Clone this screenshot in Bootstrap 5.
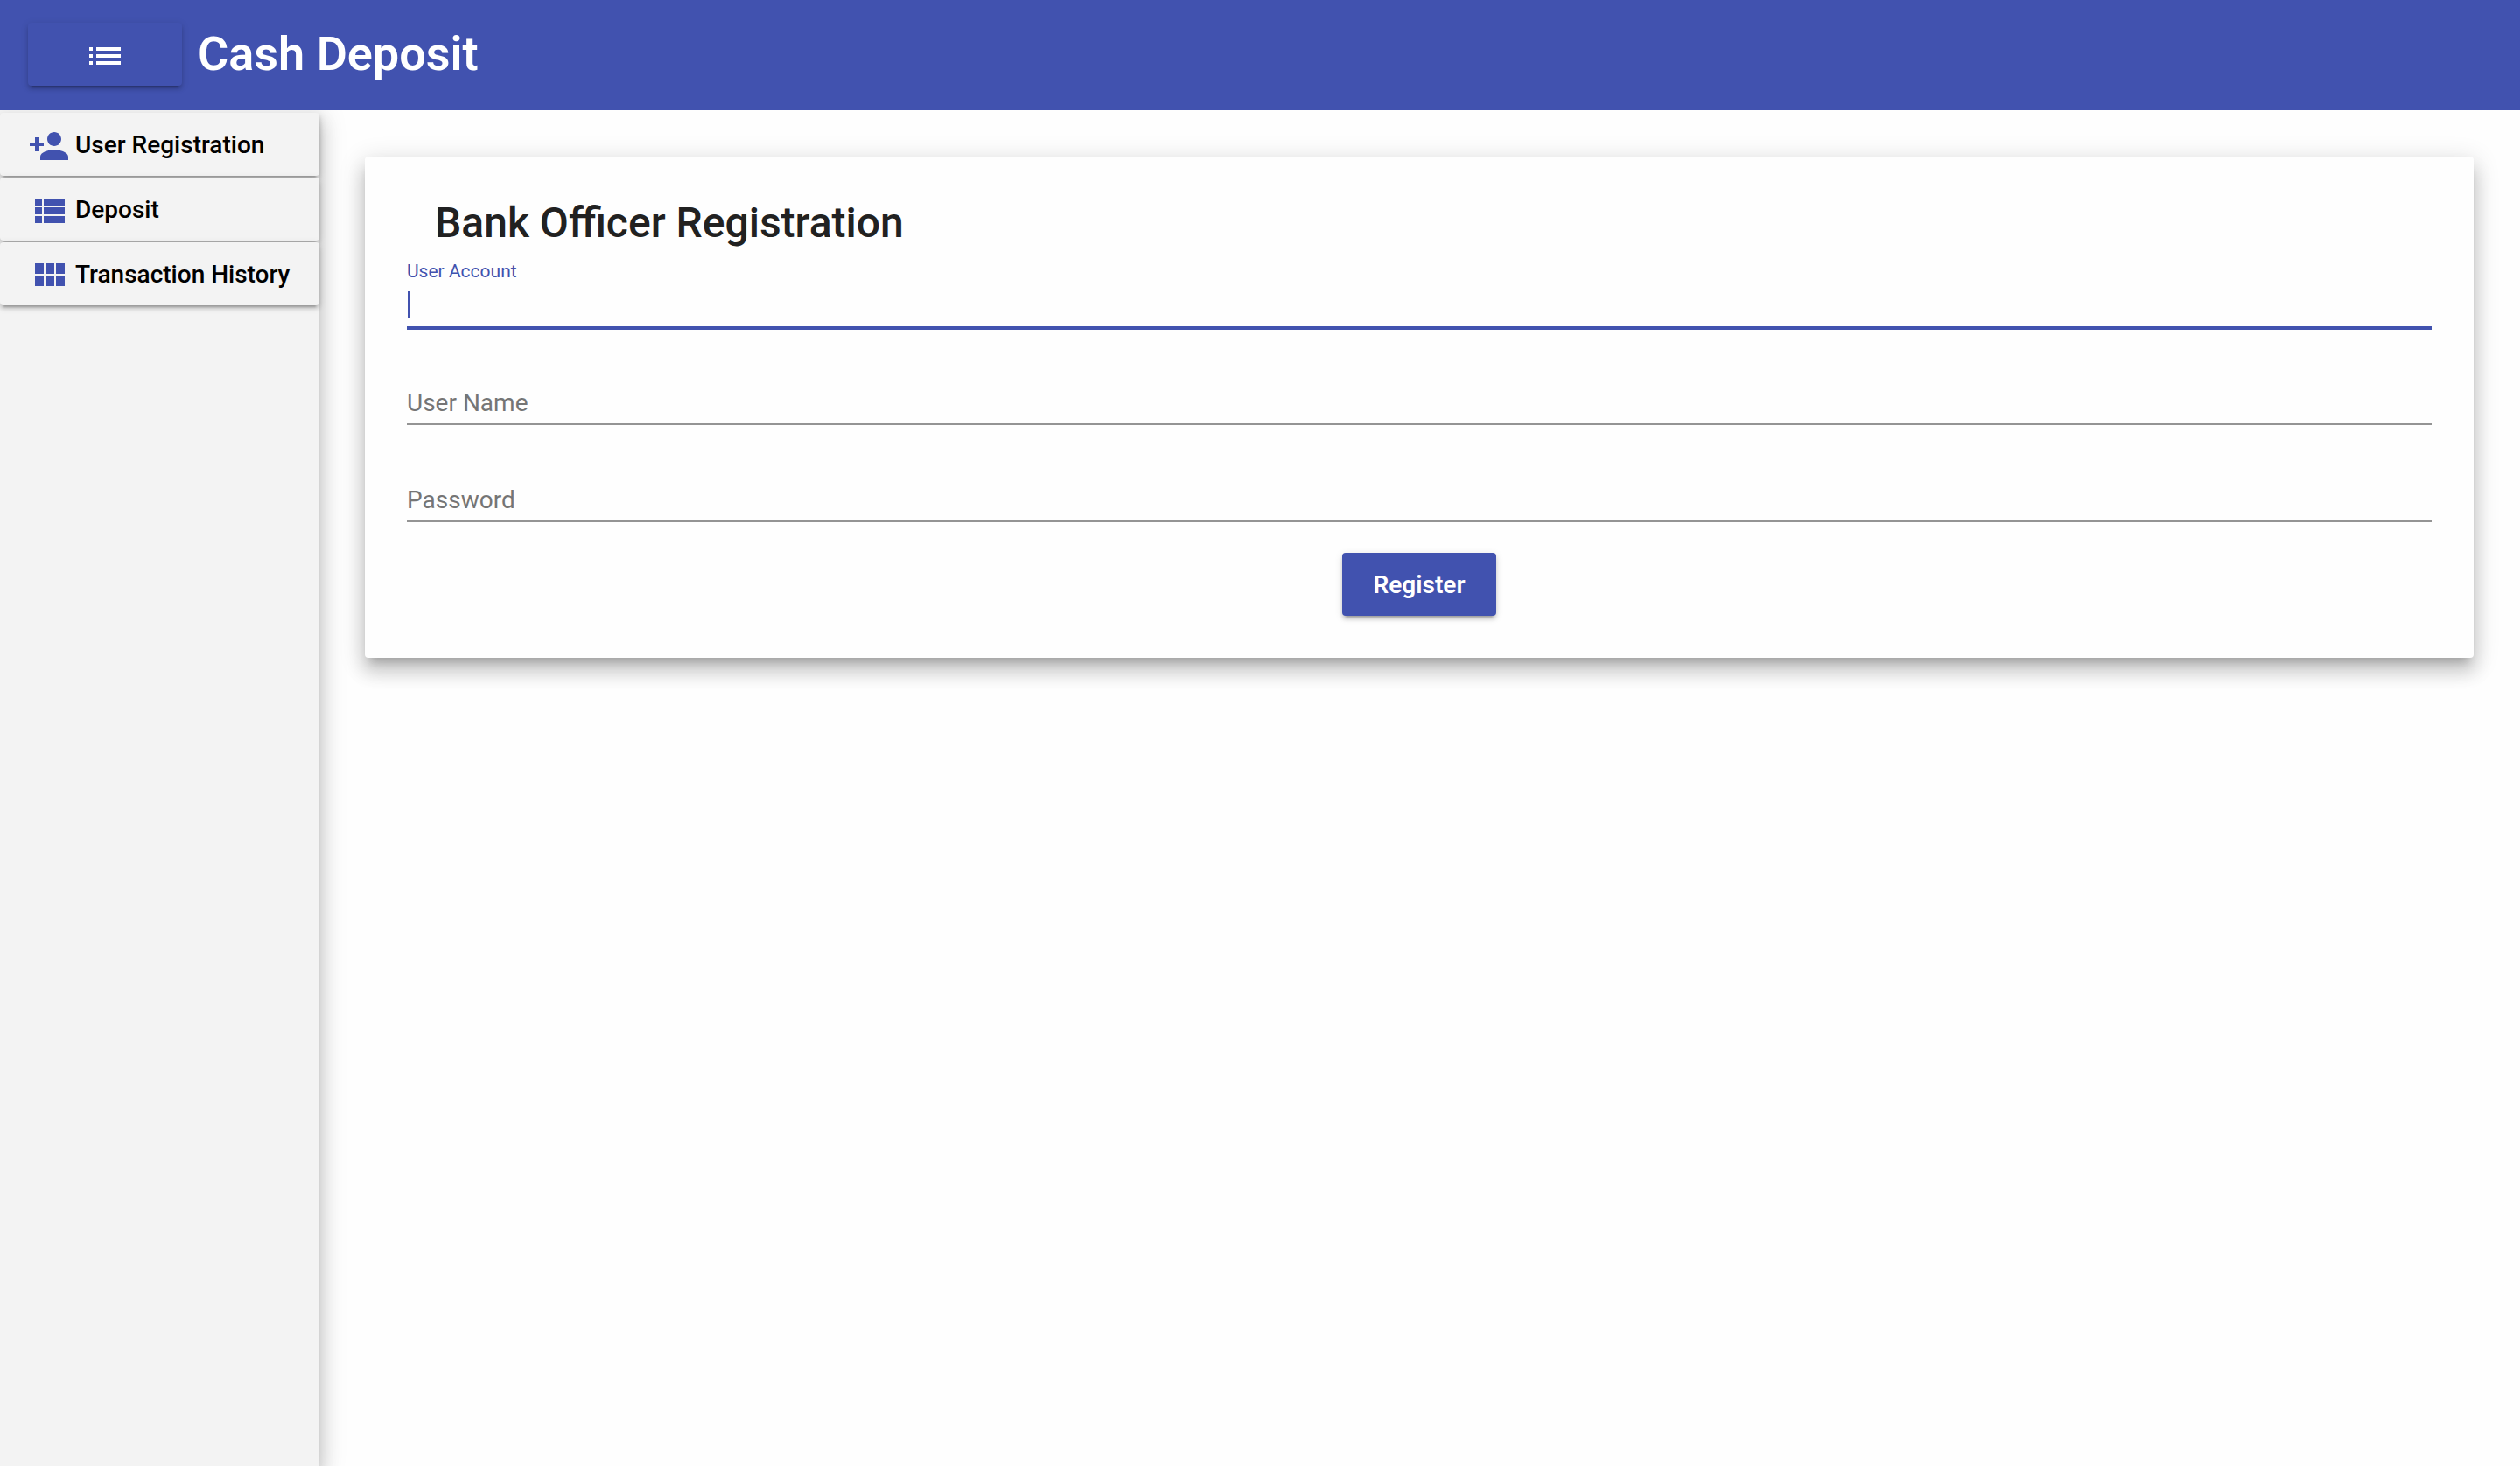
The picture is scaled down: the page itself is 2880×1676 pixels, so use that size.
<!DOCTYPE html>
<html lang="en">
<head>
<meta charset="utf-8">
<meta name="viewport" content="width=device-width, initial-scale=1">
<title>Cash Deposit</title>
<link href="https://cdn.jsdelivr.net/npm/bootstrap@5.3.0/dist/css/bootstrap.min.css" rel="stylesheet">
<style>
:root {
  --brand: #4152af;
  --raised: 0 6px 2px -4px rgba(0,0,0,.2), 0 4px 4px 0 rgba(0,0,0,.14), 0 2px 10px 0 rgba(0,0,0,.12);
  --lifted: 0 10px 10px -6px rgba(0,0,0,.2), 0 16px 20px 2px rgba(0,0,0,.14), 0 6px 28px 4px rgba(0,0,0,.12);
}
body { font-family: Roboto, "Open Sans", sans-serif; font-size: 28px; color: #212121; background: #fefefe; }
.app-bar { background: var(--brand); padding: 26px 32px 28px; gap: 18px; position: relative; z-index: 2; }
.app-bar h1 { font-size: 54px; line-height: 72px; font-weight: 600; }
.raised-btn { height: 72px; width: 176px; padding: 2px 0 0; border: 0; border-radius: 4px; background: var(--brand); color: #fff; font-size: 28px; font-weight: 600; box-shadow: var(--raised); }
.raised-btn:hover { background: var(--brand); color: #fff; }
.glyph { width: 48px; height: 48px; margin-top: 2px; fill: currentColor; flex: none; }
.side-nav { width: 365px; flex: none; background: #f3f3f3; padding-top: 3px; gap: 2px; box-shadow: var(--lifted); }
.side-link { height: 72px; padding: 2px 32px 0; gap: 6px; border-radius: 4px; background: #f3f3f3; color: #000; font-weight: 500; text-decoration: none; white-space: nowrap; box-shadow: var(--raised); }
.side-link .glyph { color: var(--brand); }
.page-area { padding: 53px 53px 52px 52px; }
.form-card { border: 0; border-radius: 4px; padding: 48px; background: #fefefe; box-shadow: var(--lifted); }
.form-card h2 { font-size: 48px; line-height: 56px; font-weight: 500; padding-left: 32px; margin-bottom: 14px; }
.field-label { font-size: 21px; line-height: 26px; color: var(--brand); }
.resting-label { grid-area: 1 / 1; align-self: center; justify-self: start; padding-top: 2px; line-height: 42px; color: #757575; pointer-events: none; z-index: 1; }
.resting-label + .line-input { grid-area: 1 / 1; }
.resting-label:has(+ .line-input:focus), .resting-label:has(+ .line-input:valid) { opacity: 0; }
.line-input { height: 52px; padding: 2px 0 0; border: 0; border-bottom: 2px solid #949494; border-radius: 0; background-color: transparent; font-size: 28px; color: #212121; }
.line-input:focus { box-shadow: 0 2px 0 var(--brand); border-color: var(--brand); background-color: transparent; }
.line-input.is-active { border-color: var(--brand); box-shadow: 0 2px 0 var(--brand); background: linear-gradient(var(--brand), var(--brand)) 1px 10px / 2px 31px no-repeat; }
.field-stack { gap: 59px; margin-bottom: 35px; }
</style>
<script src="https://cdn.jsdelivr.net/npm/bootstrap@5.3.0/dist/js/bootstrap.bundle.min.js" defer></script>
</head>
<body class="d-flex flex-column min-vh-100">
<header class="app-bar d-flex align-items-center text-white">
  <button type="button" class="btn raised-btn d-flex align-items-center justify-content-center" aria-label="Menu">
    <svg class="glyph" viewBox="0 0 24 24" aria-hidden="true"><path d="M3 13h2v-2H3v2zm0 4h2v-2H3v2zm0-8h2V7H3v2zm4 4h14v-2H7v2zm0 4h14v-2H7v2zM7 7v2h14V7H7z"/></svg>
  </button>
  <h1 class="mb-0">Cash Deposit</h1>
</header>
<div class="d-flex flex-grow-1 overflow-hidden">
  <nav class="side-nav d-flex flex-column" aria-label="Main">
    <a href="#" class="side-link d-flex align-items-center">
      <svg class="glyph" viewBox="0 0 24 24" aria-hidden="true"><path d="M15 12c2.21 0 4-1.79 4-4s-1.79-4-4-4-4 1.790-4 4 1.790 4 4 4zm-9-2V7H4v3H1v2h3v3h2v-3h3v-2H6zm9 4c-2.670 0-8 1.340-8 4v2h16v-2c0-2.660-5.330-4-8-4z"/></svg>
      User Registration
    </a>
    <a href="#" class="side-link d-flex align-items-center">
      <svg class="glyph" viewBox="0 0 24 24" aria-hidden="true"><path d="M4 14h4v-4H4v4zm0 5h4v-4H4v4zM4 9h4V5H4v4zm5 5h12v-4H9v4zm0 5h12v-4H9v4zM9 5v4h12V5H9z"/></svg>
      Deposit
    </a>
    <a href="#" class="side-link d-flex align-items-center">
      <svg class="glyph" viewBox="0 0 24 24" aria-hidden="true"><path d="M4 11h5V5H4v6zm0 7h5v-6H4v6zm6 0h5v-6h-5v6zm6 0h5v-6h-5v6zm-6-7h5V5h-5v6zm6-6v6h5V5h-5z"/></svg>
      Transaction History
    </a>
  </nav>
  <main class="page-area flex-grow-1">
    <form class="card form-card">
      <h2>Bank Officer Registration</h2>
      <div class="field-stack d-flex flex-column">
        <div>
          <label for="account" class="field-label d-block">User Account</label>
          <input id="account" type="text" class="form-control line-input is-active">
        </div>
        <div class="d-grid">
          <label for="username" class="resting-label">User Name</label>
          <input id="username" type="text" class="form-control line-input" required>
        </div>
        <div class="d-grid">
          <label for="password" class="resting-label">Password</label>
          <input id="password" type="password" class="form-control line-input" required>
        </div>
      </div>
      <button type="submit" class="btn raised-btn align-self-center">Register</button>
    </form>
  </main>
</div>
</body>
</html>
